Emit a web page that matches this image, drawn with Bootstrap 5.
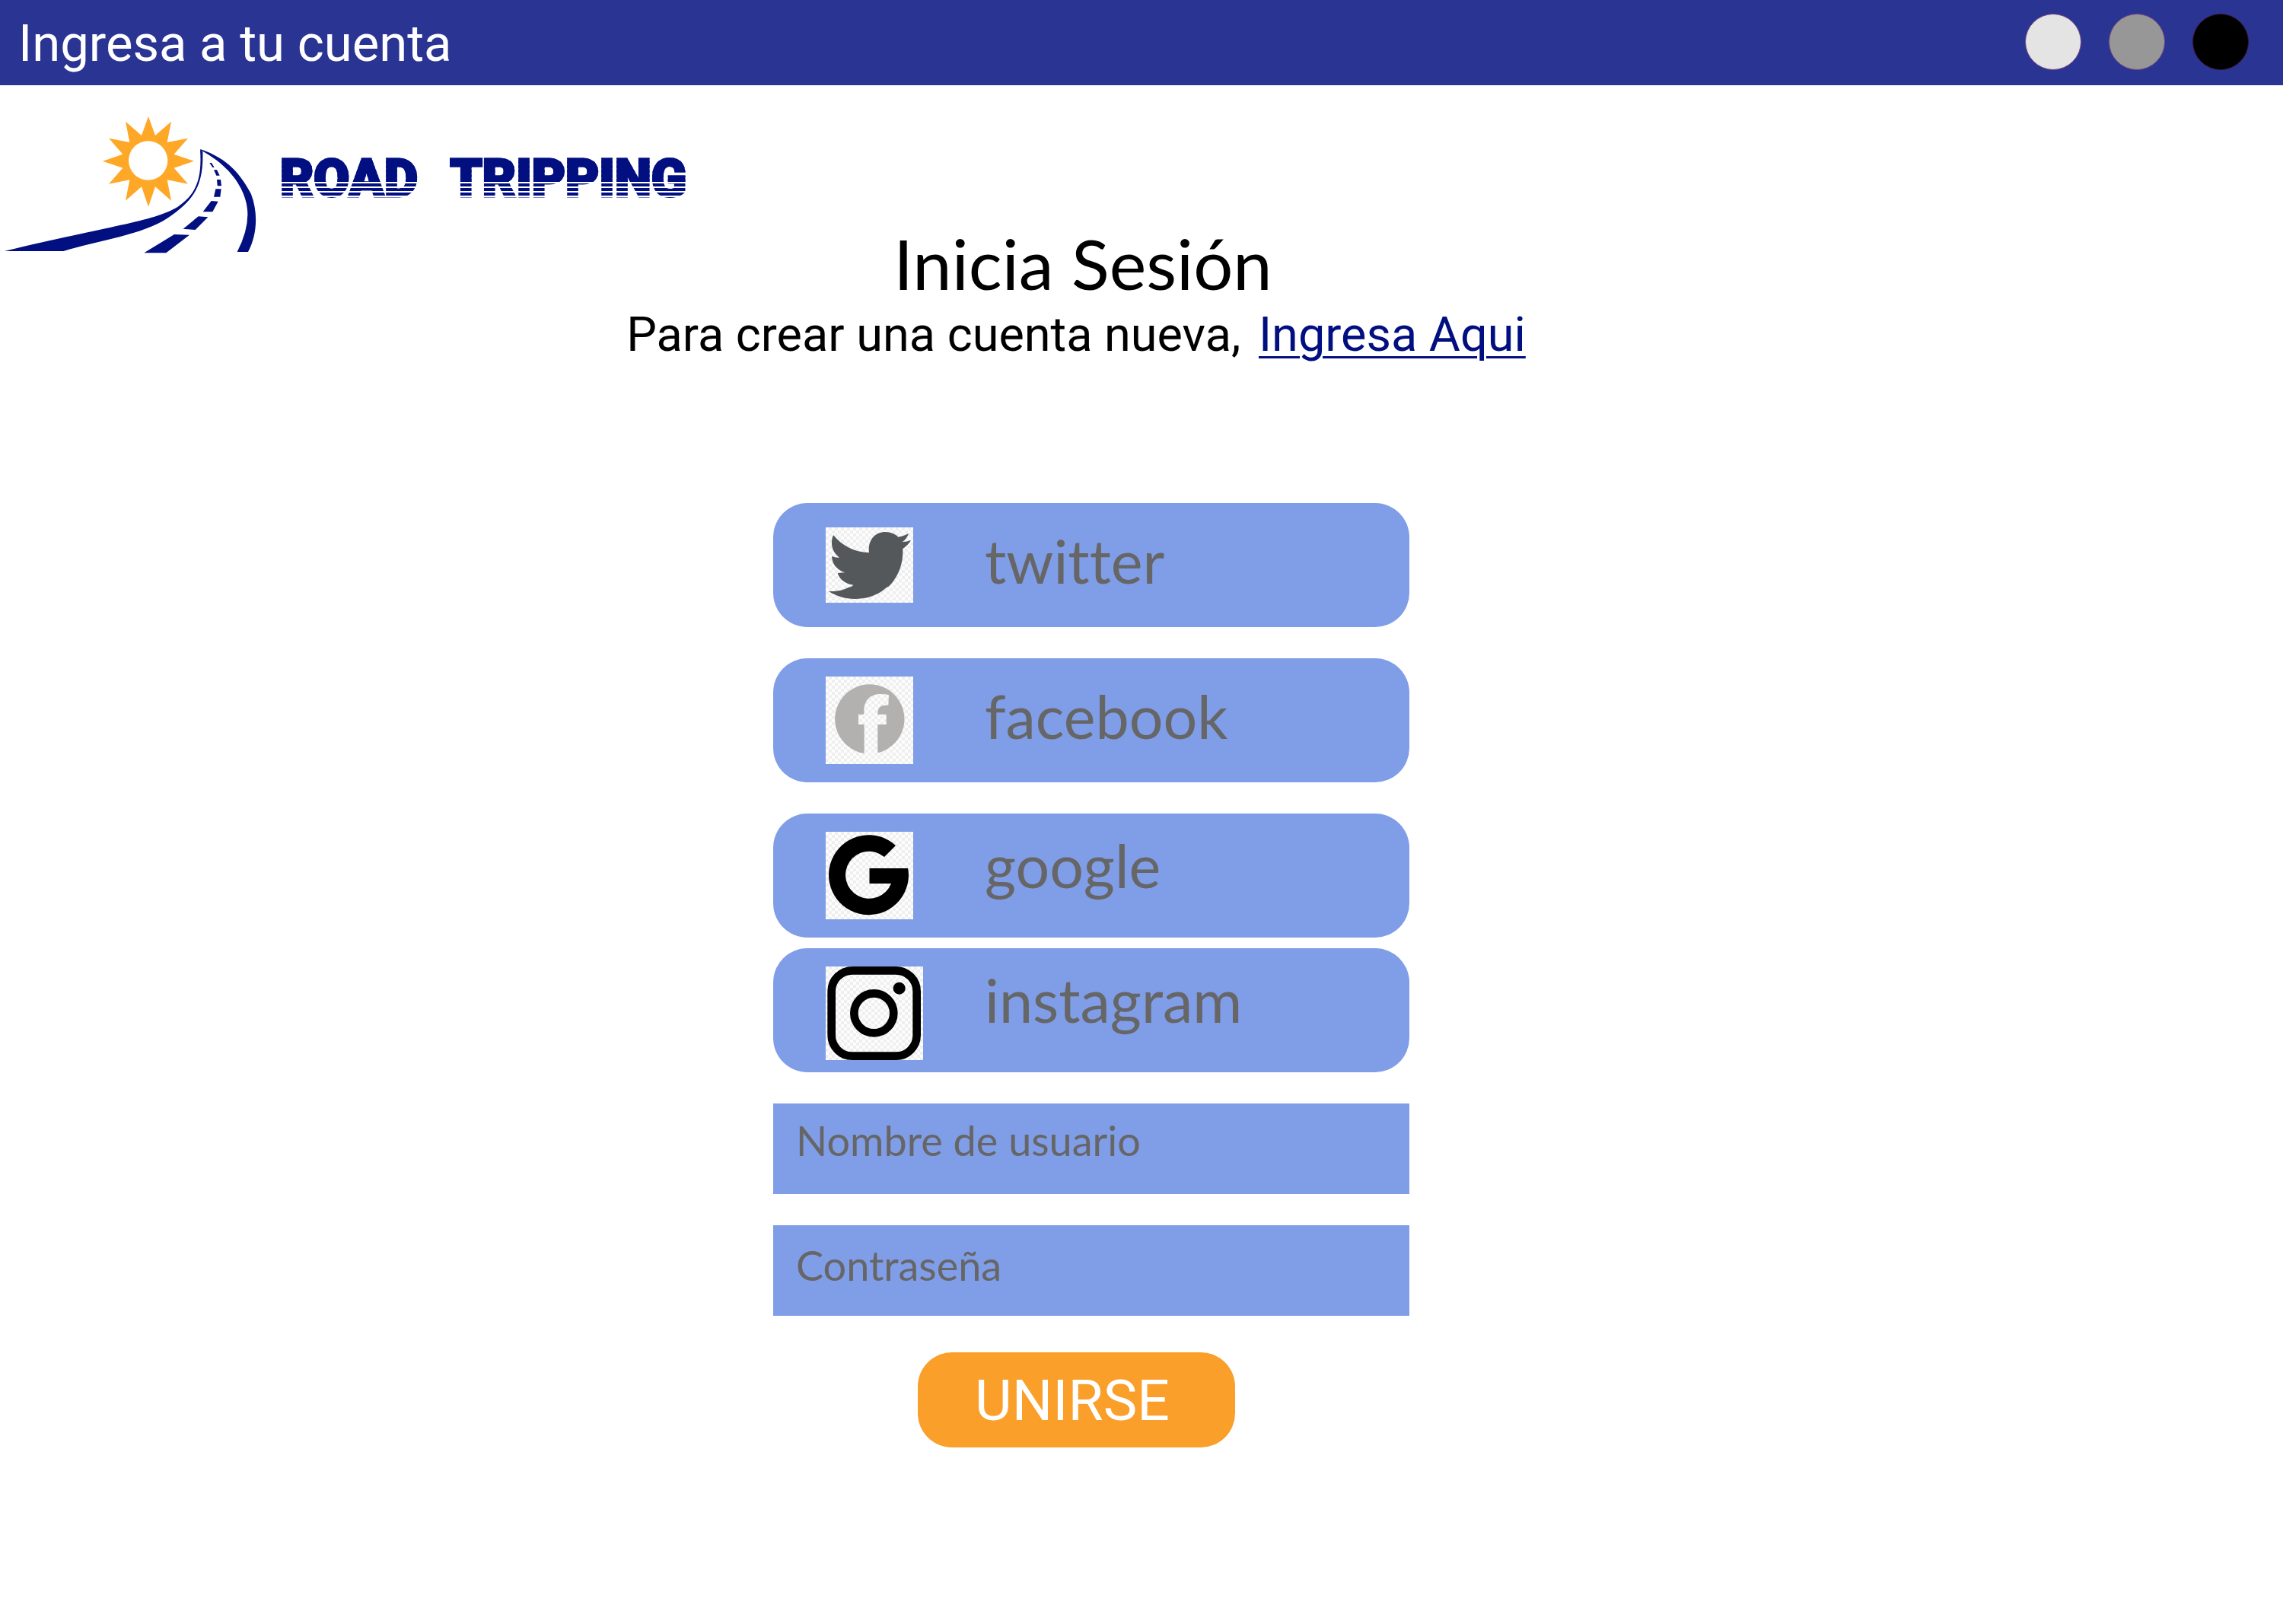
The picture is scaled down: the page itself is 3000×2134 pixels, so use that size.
<!DOCTYPE html>
<html lang="es">
<head>
<meta charset="utf-8">
<meta name="viewport" content="width=device-width, initial-scale=1">
<title>Ingresa a tu cuenta</title>
<link rel="stylesheet" href="https://cdn.jsdelivr.net/npm/bootstrap@5.3.0/dist/css/bootstrap.min.css">
<style>
  body { font-family: Roboto, sans-serif; color: #000; background: #fff; }
  .topbar { background: #2a3492; height: 112px; padding: 0 45px 2px 24px; }
  .topbar-title { font-size: 67px; line-height: 80px; color: #fff; }
  .dots { gap: 36px; }
  .dot { width: 74px; height: 74px; border: 1px solid #7a4a80; }
  .dot-light { background: #e4e4e4; }
  .dot-mid { background: #979797; }
  .dot-dark { background: #000; border-color: #3a1030; }
  .brand { padding-top: 28px; color: #020f80; }
  .wordmark { font-weight: 900; font-size: 68px; line-height: 84px; gap: 42px; padding: 0 0 20px 8px; }
  .wordmark span {
    color: transparent;
    background: linear-gradient(#020f80 46px, transparent 46px), repeating-linear-gradient(#020f80 0 4px, #fff 4px 6px);
    -webkit-background-clip: text; background-clip: text;
    -webkit-text-stroke: 3px transparent;
  }
  .login { margin-top: -60px; padding-right: 172px; }
  .login-title { font-family: Lato, sans-serif; font-size: 92px; line-height: 112px; padding-left: 18px; }
  .login-text { font-size: 63px; line-height: 76px; }
  .login-text a { color: #020f80; margin-left: 8px; text-decoration-thickness: 3px; text-underline-offset: 7px; }
  .login-form { width: 876px; max-width: 100%; padding: 183px 0 0 40px; font-family: Lato, sans-serif; }
  .social { height: 163px; border-radius: 45px; background: #809de7; color: #666; font-size: 79px; line-height: 100px; padding: 0 69px; border: 0; }
  .social-label { margin-left: 91px; padding-bottom: 12px; font-variant-ligatures: none; }
  .raised { padding-bottom: 28px; }
  .icon-tile { width: 118px; }
  .social svg { background: repeating-conic-gradient(#efefef 0 25%, #fdfdfd 0 50%) 0 0 / 8px 8px; }
  .field-box, .field-box:focus { height: 119px; background: #809de7; color: #333; font-size: 54px; line-height: 72px; padding: 0 30px; }
  .field-label { position: absolute; top: 13px; left: 30px; color: #666; font-size: 54px; line-height: 72px; pointer-events: none; }
  .field-box:not(:placeholder-shown) + .field-label { display: none; }
  .gap-stack { margin-bottom: 41px; }
  .gap-tight { margin-bottom: 14px; }
  .join { width: 417px; height: 125px; border-radius: 45px; background: #f99f2a; color: #fff; font-family: Roboto, sans-serif; font-size: 75px; line-height: 90px; padding: 0 10px 0 0; border: 0; }
  .join:hover { background: #e98f1a; color: #fff; }
</style>
</head>
<body>
<nav class="topbar d-flex align-items-center justify-content-between">
  <div class="topbar-title pt-1">Ingresa a tu cuenta</div>
  <div class="dots d-flex">
    <button type="button" class="dot dot-light rounded-circle p-0" aria-label="Minimizar"></button>
    <button type="button" class="dot dot-mid rounded-circle p-0" aria-label="Maximizar"></button>
    <button type="button" class="dot dot-dark rounded-circle p-0" aria-label="Cerrar"></button>
  </div>
</nav>

<header class="brand d-flex align-items-center">
  <svg width="360" height="210" viewBox="0 0 1080 630" aria-hidden="true">
    <path transform="translate(585 215)" fill="#ffa726" fill-rule="evenodd" d="M180 0L101 27 156 90 74 74 90 156 27 101 0 180-27 101-90 156-74 74-156 90-101 27-180 0-101-27-156-90-74-74-90-156-27-101 0-176 27-101 90-156 74-74 156-90 101-27ZM76-2A77 77 0 1 0-78-2 77 77 0 1 0 76-2Z"/>
    <g fill="#020f80">
      <path d="M18 570L250 570C400 525 560 505 660 440C765 370 803 310 799 178L789 170C798 300 765 350 700 396C600 455 430 470 18 570Z"/>
      <path d="M790 168C900 205 950 270 990 345C1018 420 1014 505 978 573H935Q978 490 976 420C974 340 920 240 790 172Z"/>
      <path d="M568 577L687 504 747 506 655 577ZM722 482L782 433 820 436 770 486ZM800 415L833 372 860 374 838 415ZM843 356L850 325 872 325 868 356ZM855 288L870 288 873 313 857 313ZM843 250L855 250 866 272 853 272ZM826 222L834 222 845 240 838 240Z"/>
    </g>
  </svg>
  <div class="wordmark d-flex"><span>ROAD</span><span>TRIPPING</span></div>
</header>

<main class="login d-flex flex-column align-items-center">
  <h1 class="login-title fw-normal m-0">Inicia Sesión</h1>
  <p class="login-text m-0">Para crear una cuenta nueva, <a href="#registro">Ingresa Aqui</a></p>

  <form class="login-form" id="acceso">
    <button type="button" class="social gap-stack btn w-100 d-flex align-items-center">
      <span class="icon-tile d-flex"><svg width="115" height="99" viewBox="0 0 345 297" aria-hidden="true"><path fill="#54585a" d="M30 30C65 72 110 97 171 100C165 50 195 18 235 18C258 18 275 27 286 38Q308 35 327 24Q320 45 302 58Q320 57 336 51Q325 70 304 84C306 150 285 195 250 232Q244 234 236 240C200 272 155 282 115 282C75 282 40 270 12 252C45 253 70 247 90 236Q104 234 109 227C75 222 55 205 47 180L76 178C45 168 25 145 24 114Q38 120 54 119C22 95 18 60 30 30Z"/></svg></span>
      <span class="social-label">twitter</span>
    </button>
    <button type="button" class="social gap-stack btn w-100 d-flex align-items-center">
      <span class="icon-tile d-flex"><svg width="115" height="115" viewBox="0 0 345 345" aria-hidden="true"><path fill="#b2b1b0" d="M205 301A137 137 0 1 0 152 303V189H129V149H151V135C151 90 180 68 218 69Q236 69 249 73L247 114C218 110 205 120 205 149H239V189H205Z"/></svg></span>
      <span class="social-label">facebook</span>
    </button>
    <button type="button" class="social gap-tight btn w-100 d-flex align-items-center">
      <span class="icon-tile d-flex"><svg width="115" height="115" viewBox="0 0 115 115" aria-hidden="true"><path d="M92 18A52.5 52.5 0 1 0 109 57Q109 52 108 48H57.500V68H86A31 31 0 1 1 77 33Z"/></svg></span>
      <span class="social-label raised">google</span>
    </button>
    <button type="button" class="social gap-stack btn w-100 d-flex align-items-center">
      <span class="icon-tile d-flex mt-2"><svg class="flex-shrink-0" width="128" height="123" viewBox="0 0 384 369" aria-hidden="true"><g fill="none" stroke="#000" stroke-width="32"><rect x="23" y="16" width="336" height="337" rx="82"/><circle cx="190" cy="184" r="78"/></g><circle cx="290" cy="86" r="24"/></svg></span>
      <span class="social-label raised">instagram</span>
    </button>
    <div class="position-relative gap-stack">
      <input class="field-box form-control rounded-0 border-0" id="usuario" type="text" placeholder=" ">
      <label class="field-label" for="usuario">Nombre de usuario</label>
    </div>
    <div class="position-relative">
      <input class="field-box form-control rounded-0 border-0" id="clave" type="password" placeholder=" ">
      <label class="field-label pt-1" for="clave">Contraseña</label>
    </div>
  </form>
  <button type="submit" form="acceso" class="join btn mt-5">UNIRSE</button>
</main>
<script src="https://cdn.jsdelivr.net/npm/bootstrap@5.3.0/dist/js/bootstrap.bundle.min.js"></script>
</body>
</html>
